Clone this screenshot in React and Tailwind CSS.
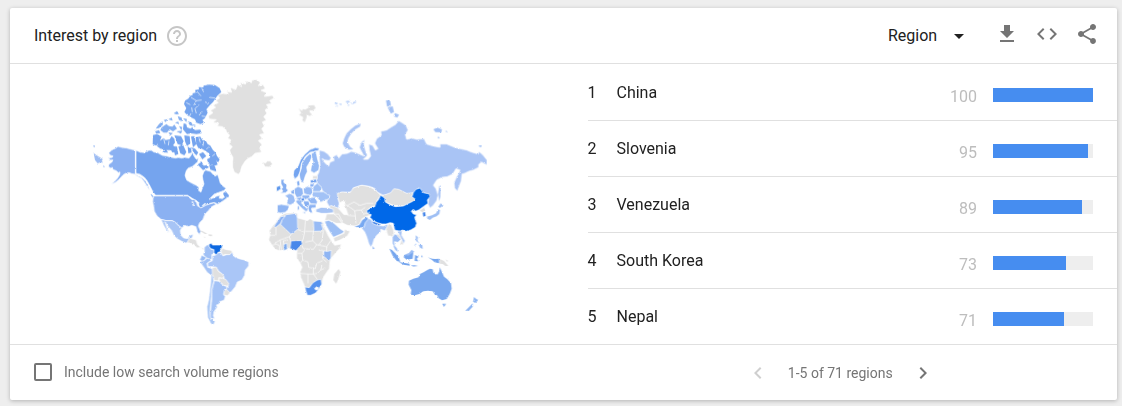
import { useState } from 'react'
import { MdArrowDropDown, MdChevronLeft, MdChevronRight, MdCode, MdGetApp, MdHelpOutline, MdShare } from 'react-icons/md'

const regions = [
  { rank: 1, name: 'China', value: 100 },
  { rank: 2, name: 'Slovenia', value: 95 },
  { rank: 3, name: 'Venezuela', value: 89 },
  { rank: 4, name: 'South Korea', value: 73 },
  { rank: 5, name: 'Nepal', value: 71 },
]

const NONE = '#e0e0e0'

// [fill, path], grouped by the part of the world they sit in
const northAmerica = [
  // Alaska
  ['#8bb1f2', 'M151 240L140 238L125 234L110 232L99 229L92 234L80 240L71 249L76 256L84 258L82 262L70 264L76 270L84 270L80 277L72 282L70 289L76 294L82 292L84 299L93 302L100 308L105 306L104 314L97 325L88 335L78 343L90 338L100 330L108 322L114 315L122 310L132 308L140 311L151 313L162 318L172 324L182 334L190 348L194 360L188 352L178 336L170 326L160 320L151 315Z'],
  // Canada
  ['#74a4ee', 'M153 241L165 246L178 248L188 242L198 240L207 246L218 248L232 256L245 258L260 262L272 264L280 262L290 264L300 262L312 264L318 256L323 246L326 256L334 268L340 264L338 276L330 282L322 290L310 294L304 302L300 316L305 330L318 338L334 346L342 352L341 362L348 366L352 354L357 342L354 330L352 318L356 306L362 300L376 304L384 312L390 318L398 314L402 326L406 340L414 348L424 356L416 362L400 368L388 372L372 388L384 384L396 378L406 376L402 384L412 386L424 376L426 384L412 394L398 402L388 398L376 400L366 404L352 412L344 414L340 400L334 392L318 384L308 376L212 376L204 366L196 350L186 332L178 322L165 313L153 310Z'],
  // Greenland, Iceland
  [NONE, 'M370 138L384 128L376 122L392 112L384 106L400 98L392 92L404 84L398 76L412 70L430 72L424 64L440 67L436 52L452 59L458 44L470 50L466 38L482 42L484 33L500 38L500 31L516 29L526 38L520 47L534 44L541 56L528 61L544 68L538 79L550 78L562 76L567 84L554 92L560 100L544 104L550 112L540 120L546 130L536 140L544 150L532 156L538 168L530 176L538 190L524 194L532 206L520 212L531 224L524 234L530 246L510 250L500 260L488 266L480 274L470 290L466 306L460 313L448 306L443 292L443 276L444 262L437 250L434 240L442 230L432 222L438 210L428 204L434 196L425 186L422 178L412 170L396 168L402 160L384 157L394 149L373 147Z'],
  [NONE, 'M532 276L542 279L546 273L556 273L563 282L552 291L540 290Z'],
]

const arctic = [
  // Aleutians
  ['#9dbcf3', 'M26 249L35 256L45 262L54 268L50 272L54 278L46 277L38 280L30 270ZM24 227l6 0v4l-5 -1zM54 286l6 4l-4 2z'],
  // Newfoundland, Vancouver Island
  ['#74a4ee', 'M414 370L422 364L432 376L430 382L418 380ZM196 370l10 10l-4 2z'],
  // Ellesmere, Axel Heiberg
  ['#74a4ee', 'M315 78L324 74L322 70L332 68L330 60L342 58L341 51L355 52L356 47L372 44L390 45L404 54L409 66L398 76L392 84L384 96L374 106L364 118L368 128L360 144L352 150L358 158L346 162L334 158L330 148L318 142L308 136L298 126L304 114L297 102L300 92L310 86Z'],
  // Devon, Cornwallis
  ['#74a4ee', 'M294 178L296 160L304 162L306 172L316 176L322 172L330 180L346 179L350 189L335 192L318 190L306 192Z'],
  // Banks, Victoria
  ['#74a4ee', 'M204 195L216 192L230 200L224 214L214 227L203 223ZM222 214L236 204L242 210L254 208L260 198L268 206L270 218L264 226L272 232L274 246L262 247L258 240L244 240L250 248L232 247L238 238L226 236L216 228Z'],
  // Parry Islands
  ['#83aef0', 'M212 176L222 162L232 154L234 164L222 174ZM230 172L244 162L252 168L262 170L268 164L276 176L264 184L254 178L246 188L236 188L226 180ZM236 150l12 -3l-6 9zM250 148l10 -5l3 9zM266 130l10 -7l6 9l-8 1zM278 138l12 5l2 10l-10 -3zM270 158l10 -3l2 8zM282 168l10 3l-3 10zM274 184l18 -2l-4 9zM250 187l14 2l-8 7zM210 184l12 -4l4 9l-12 2zM294 144l12 3l-2 9zM308 154l12 4l4 10l-10 -3zM322 162l10 3l-2 6z'],
  // Prince of Wales, Somerset, King William
  ['#74a4ee', 'M268 196L288 198L296 214L290 226L278 222ZM298 196L314 198L316 220L306 228L300 214ZM280 230L294 224L304 246L298 256L286 250ZM264 228l12 2l4 22l-10 4zM308 230l10 4l2 14l-10 2z'],
  // Baffin
  ['#74a4ee', 'M318 200L328 198L334 222L324 232ZM332 202L346 200L352 210L362 212L368 222L376 227L384 240L392 248L396 258L404 268L400 276L394 272L398 284L386 288L370 280L366 268L376 262L372 250L360 242L350 236L340 234L334 222ZM342 252L354 246L364 258L352 268ZM338 284L350 275L356 287L366 285L372 292L354 300ZM318 232l12 4l10 12l-6 8l-8 -8zM372 284l18 5l4 16l-18 -6z'],
]

// fjords and straits cut into the arctic islands
const fjords = 'M336 64L348 78M350 54L356 66M318 82L334 92L350 90M334 92L326 106M342 104L330 116L334 130M304 98L316 104M390 84L374 82M372 100L360 96M352 124L342 136M320 112L322 126M312 142L318 130M364 140L350 138M236 206L240 222M252 212L250 226M342 204L346 218M356 214L354 228M372 230L364 238M390 252L382 258'

const southAmerica = [
  // USA, Mexico
  ['#8bb1f2', 'M205 18H308L320 25L333 32L338 48L348 54L362 46L374 42L388 38L392 44L380 50L370 62L360 72L354 88L344 98L340 108L347 124L344 134L337 126L333 110L320 106L310 110L298 106L291 114L280 106L272 98L262 92L244 92L228 88L216 78L208 64L206 50L203 34Z'],
  ['#a7c4f5', 'M228 88L244 92L262 92L272 98L282 108L290 114L286 122L288 136L296 144L308 146L314 136L325 133L321 144L312 150L304 160L290 154L276 146L266 136L260 122L248 108L240 95L246 114L254 128L244 120L236 106Z'],
  [NONE, 'M306 158L314 145L322 147L333 149L338 164L347 172L336 174L326 163L314 159ZM346 171L358 176L356 181Z'],
  // Colombia, Venezuela, Guyanas, Ecuador
  ['#a0c0f5', 'M358 172L366 165L374 164L373 170L378 178L387 180L388 190L380 194L381 208L372 208L360 202L354 192L358 186Z'],
  ['#1168e0', 'M372 163L380 159L382 165L396 165L410 165L412 171L407 178L407 185L399 187L399 192L392 195L387 187L387 179L378 176L373 171Z'],
  [NONE, 'M411 174L424 179L438 181L444 188L432 195L420 193L414 197L408 186Z'],
  ['#98bbf4', 'M350 196L364 202L358 212L350 217L345 208Z'],
  // Brazil, Peru
  ['#aac6f7', 'M382 198L392 195L400 188L408 188L414 198L424 194L434 194L441 187L448 200L462 206L478 210L491 216L491 228L481 240L479 256L471 270L457 276L451 290L440 304L432 310L422 298L430 288L424 276L416 264L410 252L400 242L392 232L382 230L368 230L368 218L382 212Z'],
  ['#a3c2f6', 'M346 214L358 212L366 204L380 210L366 220L368 232L382 236L384 250L378 256L366 247L355 230L346 218Z'],
  // Bolivia, Paraguay, Uruguay
  [NONE, 'M382 233L394 231L400 244L412 252L418 262L410 265L402 263L400 273L388 272L382 254Z'],
  [NONE, 'M401 264L412 265L422 268L431 280L429 289L414 286L403 273Z'],
  [NONE, 'M417 301L424 298L435 308L428 317L417 315Z'],
  // Argentina, Chile
  ['#a3c2f6', 'M388 272L402 274L414 286L427 290L418 300L416 314L421 320L417 331L404 335L402 343L394 345L397 351L387 365L385 377L389 386L375 385L376 366L378 350L380 330L380 300Z'],
  ['#a7c6f6', 'M379 256L384 256L386 274L380 300L379 320L376 350L375 370L376 384L390 394L386 404L400 408L378 402L368 382L366 350L371 330L376 290Z'],
]

const caribbean = [
  [NONE, 'M342 121L352 123L367 131L360 132L350 126ZM370 133L382 134L380 139L372 138ZM356 140l6 1l-3 2z'],
]

const russia = [
  ['#a9c4f5', 'M178 240L192 244L204 252L213 264L208 272L194 270L186 266L194 278L206 288L210 276L222 272L220 260L230 254L236 264L246 252L262 250L274 244L288 248L298 252L312 258L304 244L298 232L304 216L314 208L312 224L316 240L322 256L310 268L324 268L332 258L328 240L326 222L338 226L346 240L354 236L344 220L350 206L364 196L362 184L380 180L392 172L406 164L416 152L426 158L438 166L444 180L436 194L440 208L456 204L470 208L492 206L500 222L520 228L540 232L540 222L560 222L584 232L600 236L620 240L634 246L655 252L656 244L668 254L681 270L681 285L664 276L656 284L656 292L640 300L626 304L614 310L606 312L604 332L592 364L584 354L582 338L590 320L596 310L600 300L588 296L578 312L562 320L546 322L530 330L520 346L528 356L534 376L530 392L520 406L510 414L504 402L506 386L490 376L480 360L474 356L466 366L468 376L440 374L400 362L390 376L370 376L350 366L345 356L330 350L305 346L280 354L278 366L240 368L234 384L238 400L234 418L222 416L208 410L200 396L206 380L190 366L182 352L170 340L168 322L176 308L180 288L178 262Z'],
]

const russianIslands = [
  // Svalbard
  [NONE, 'M116 115L126 123L128 117L136 119L146 113L144 107L162 105L167 114L158 122L148 120L150 128L156 134L148 138L140 132L140 142L134 157L127 150L130 142L117 134L124 130Z'],
  ['#b9d0f8', 'M224 98h8v5h-6zM236 102l8 -2v6zM228 106l8 3l-6 1zM256 94l10 -2l4 4l-8 3zM272 100l8 -4l8 -3v5l-10 4zM262 104l6 0l-2 5z'],
  ['#a2c0f4', 'M378 91L390 91L393 107L381 110ZM383 112L398 109L402 126L392 131ZM404 129L417 134L412 143L402 139Z'],
  ['#a9c4f5', 'M248 220L253 204L260 190L272 178L286 167L302 161L300 170L286 178L274 190L265 204L262 216L270 230L280 238L266 239L252 230Z'],
  ['#a2c0f4', 'M520 178L532 173L546 178L544 187L526 186ZM556 182l6 2l-2 4zM533 200l7 3l-6 3zM656 226h9v4l-6 1z'],
  ['#a9c4f5', 'M538 347L542 352L541 380L538 394L534 372Z'],
]

const asiaAfrica = [
  // Central Asia and Iran
  [NONE, 'M234 24L232 10L246 6L270 8L280 -6L304 -14L328 -10L346 0L362 16L350 34L344 48L332 52L322 60L334 74L318 80L306 86L298 104L284 108L262 106L246 98L236 84L222 76L220 66L208 54L212 46L234 54L252 74L264 74L258 56L252 48L256 36L246 34L240 40Z'],
  [NONE, 'M200 72L222 72L236 84L246 100L228 100L206 90L194 92Z'],
  ['#a7c4f5', 'M168 58L184 52L208 54L220 58L220 68L200 70L184 70L168 66Z'],
  // Arabia
  ['#9dbff5', 'M194 94L206 91L222 100L240 116L252 124L248 130L238 134L220 142L208 124L198 106Z'],
  [NONE, 'M220 144L238 136L252 130L254 118L270 124L262 138L240 150L224 156Z'],
  // Pakistan, India, Nepal
  ['#77a8f1', 'M284 109L298 104L306 90L320 80L328 90L318 100L312 112L304 114L284 111Z'],
  ['#a7c5f7', 'M304 114L312 112L316 98L326 86L332 88L340 98L356 106L370 108L384 102L382 112L374 122L362 118L362 126L350 136L342 148L338 162L332 172L326 160L320 140L314 126Z'],
  ['#4385ea', 'M338 93L350 98L361 102L359 108L346 104L337 100Z'],
  // Mongolia, China
  [NONE, 'M362 18L376 14L392 8L402 -4L416 -2L440 10L460 8L456 20L470 28L446 40L430 48L400 46L376 36L374 24Z'],
  ['#0067e8', 'M320 62L332 54L344 50L348 38L356 28L362 16L374 24L376 36L390 44L406 50L430 48L446 40L458 34L466 28L456 20L460 8L468 -2L480 -6L490 8L508 12L510 20L502 30L504 40L490 50L476 60L466 64L460 58L454 64L460 72L470 74L464 82L470 100L466 112L452 120L438 124L428 120L418 124L404 120L400 100L390 98L378 102L366 102L352 98L340 92L330 82L334 74L322 70Z'],
  // Myanmar, Thailand, Laos, Vietnam
  [NONE, 'M384 104L392 100L400 118L402 130L398 142L392 138L384 138L378 118Z'],
  ['#9cbef5', 'M397 142L404 132L412 134L423 148L414 157L403 155L405 167L412 177L404 174L397 160Z'],
  [NONE, 'M408 130L420 136L431 152L430 165L420 163L424 150L414 140Z'],
  ['#a7c4f5', 'M412 123L427 123L425 136L435 152L431 162L424 146Z'],
  // Africa
  [NONE, 'M60 78L76 70L100 68L112 70L114 84L128 88L142 92L150 86L160 92L184 94L192 100L190 110L198 122L204 136L214 152L224 166L244 162L240 174L226 190L214 204L210 214L208 236L198 250L190 262L186 280L174 298L162 312L144 314L138 302L132 284L122 262L120 246L126 232L120 218L110 204L110 190L112 180L100 180L90 174L76 178L58 182L46 178L36 166L26 150L30 136L28 122L38 108L50 94Z'],
  ['#98bbf5', 'M66 88L78 74L108 70L112 84L113 118L98 130L92 132L66 108L62 104Z'],
  ['#8bb2f3', 'M48 100L62 80L76 78L66 90L62 100L48 112L42 110Z'],
  ['#98bbf5', 'M160 93L184 95L190 103L184 102L191 123L162 124Z'],
  ['#4a88ea', 'M93 153L108 152L125 152L127 162L118 171L108 182L98 178L90 176Z'],
  ['#7caaf0', 'M71 163L81 160L82 178L71 182Z'],
  ['#8fb5f3', 'M191 183L204 184L214 181L213 204L207 212L191 199Z'],
  ['#5792ee', 'M135 291L148 293L158 279L172 270L183 268L185 282L179 294L167 309L152 316L142 316L137 302Z'],
  ['#fff', 'M164 295l6 -5l6 3l-3 6l-6 1z'],
]

const pacific = [
  // Sri Lanka, Madagascar
  ['#98bbf4', 'M338 168L344 176L338 178Z'],
  [NONE, 'M223 252L236 237L241 246L234 270L228 281L220 270Z'],
  // Korea, Japan
  [NONE, 'M479 62L492 53L496 60L488 67Z'],
  ['#3f82e8', 'M488 68L495 66L497 77L490 80Z'],
  ['#9fbff4', 'M535 50L542 40L550 46L540 54ZM534 58L540 60L538 72L530 79L518 83L510 90L502 86L500 80L516 76L528 70Z'],
  // Malay archipelago
  ['#76a6ee', 'M388 176L396 180L406 190L416 202L421 216L410 213L398 197ZM416 216L434 219L448 221L450 227L430 224ZM433 196L446 194L452 184L460 186L458 206L440 209L431 202Z'],
  ['#9cbef5', 'M400 168l10 6l4 12l-8 -6zM433 194l14 -5l8 -10l8 6l-10 6l-8 6zM452 226l12 -1l10 3l-14 2z'],
  ['#76a6ee', 'M465 195L476 200L470 206L475 214L464 213ZM484 194l4 8l-4 0zM504 202L516 206L526 207L537 206V220L524 217L516 210Z'],
  [NONE, 'M539 207L552 213L565 228L556 228L548 222L539 221ZM556 208l8 4l-2 4z'],
  ['#9cbef5', 'M467 136L474 142L472 152L480 161L468 153ZM476 164L487 165L488 177L480 173ZM462 168l6 -8l0 4z'],
  // Australia, New Zealand
  ['#79a8ee', 'M447 272L460 266L476 262L480 252L492 246L502 240L510 236L518 238L520 248L532 254L538 244L539 232L546 246L552 260L562 268L573 280L575 296L569 312L560 327L546 331L536 325L530 314L526 316L518 304L504 302L490 304L478 312L464 316L452 314L454 300L446 284ZM547 341L558 341L552 351Z'],
  ['#8db5f2', 'M642 321L649 327L655 330L646 339L639 335ZM616 362L628 350L638 340L638 350L626 363Z'],
]

const europe = [
  ['#73a4f0', 'M70 90L72 76L84 64L92 44L104 28L120 14L136 8L148 10L146 16L130 20L120 22L106 34L94 56L90 80L84 94L74 102Z'],
  ['#8fb5f3', 'M90 100L88 88L94 70L96 54L108 36L120 26L126 34L120 50L110 66L112 80L106 92L100 112L94 112Z'],
  ['#94b9f4', 'M124 26L138 18L142 40L148 62L146 76L132 84L122 78L124 64L130 52L126 42Z'],
  ['#84aef1', 'M33 103L43 103L41 112L51 120L49 130L55 136L47 143L31 145L39 138L33 130L39 128L33 116Z'],
  ['#5f98ec', 'M19 126L30 121L33 132L20 140Z'],
  ['#9bbdf5', 'M44 152L60 145L72 152L76 168L70 176L60 180L50 176L54 160Z'],
  ['#8fb5f3', 'M22 180L34 178L58 182L54 194L46 202L32 204L22 202Z'],
  ['#92b7f4', 'M72 132L84 124L98 130L100 146L94 156L80 158L74 146Z'],
  ['#84aef1', 'M80 110l8 -4l2 14l-8 4zM62 138l10 -4l2 14l-10 -2z'],
  ['#98bbf5', 'M100 130L112 124L126 128L128 144L120 152L102 146Z'],
  [NONE, 'M128 92H142V102H128Z'],
  ['#6d9fee', 'M120 106L138 102L142 112L122 114Z'],
  ['#8bb2f3', 'M120 116H134L130 126H120Z'],
  ['#9dbff5', 'M130 124L142 114L156 128L150 140L128 140Z'],
  ['#a2c2f6', 'M126 146L130 140L150 140L160 140L180 152L176 162L164 166L152 172L142 158L128 156Z'],
  ['#94b9f4', 'M76 168L90 162L98 168L94 174L106 186L116 194L108 200L96 190L84 178ZM82 184l6 -2v12l-6 2zM96 202l12 -2l-2 6z'],
  ['#8fb5f3', 'M96 150L118 150L120 158L108 164L96 160Z'],
  ['#81acf2', 'M76 160L94 156L98 162L88 166Z'],
  ['#3c7fe8', 'M93 160H104L102 168L94 167Z'],
  ['#92b7f4', 'M110 160L134 156L142 170L140 178L122 176Z'],
  ['#86aff2', 'M100 168L116 168L120 180L112 188L102 178Z'],
  ['#8bb2f3', 'M118 178L138 178L138 188L124 190L128 204L118 202L114 190Z'],
]

// inner borders between the countries that share one fill
const borders = 'M28 136L48 136L48 112M44 160L60 150L88 140L94 132M60 150L64 178M88 140L92 154M113 118L134 126L136 92M134 126L130 146L126 156M136 124L162 124M160 124L158 152L170 164L160 178L130 176L126 166M190 124L186 152L176 164M158 152L136 156M170 164L200 170L212 152M200 170L200 184M176 180L190 182L188 206L200 216M112 190L126 190L134 180M126 190L128 210L122 218M128 210L144 216L146 232L166 236L170 220L188 212M120 250L144 252L160 252L160 232M144 252V280M160 252L172 250L182 240L186 226M160 252L172 268M182 240L196 234M36 166L48 162L58 166L58 182M240 40L262 46L282 36L300 46L320 40L340 40M262 46L284 62L304 60L316 52M284 62L286 78L262 76M286 78L288 100M304 60L310 72L330 66M222 72L236 72L248 96M72 164L70 152L84 150'

const lakes = 'M312 20L324 30M322 34L326 48M330 32L342 40M352 48L362 40'

function Countries({ shapes, transform, stroke = '#fff' }) {
  return (
    <g transform={transform} stroke={stroke} strokeWidth="2" strokeLinejoin="round">
      {shapes.map(([fill, d], i) => <path key={i} fill={fill} d={d} />)}
    </g>
  )
}

function WorldMap() {
  return (
    <svg viewBox="0 0 1212 804" className="w-[404px] h-[268px]" role="img" aria-label="Interest by region map">
      <defs>
        <filter id="coast" x="0" y="0" width="100%" height="100%">
          <feTurbulence type="fractalNoise" baseFrequency="0.2" numOctaves="2" seed="4" result="noise" />
          <feDisplacementMap in="SourceGraphic" in2="noise" scale="6" xChannelSelector="R" yChannelSelector="G" />
        </filter>
      </defs>
      <g filter="url(#coast)">
        <Countries shapes={northAmerica} />
        <Countries shapes={arctic} stroke="none" />
        <path d={fjords} fill="none" stroke="#fff" strokeWidth="2" />
        <Countries shapes={southAmerica} transform="translate(0 360)" />
        <Countries shapes={caribbean} transform="translate(0 360)" stroke="none" />
        <Countries shapes={russia} transform="translate(525 0)" />
        <Countries shapes={russianIslands} transform="translate(525 0)" stroke="none" />
        <Countries shapes={asiaAfrica} transform="translate(525 360)" />
        <Countries shapes={pacific} transform="translate(525 360)" stroke="none" />
        <Countries shapes={europe} transform="translate(555 225)" />
        <path d={borders} transform="translate(525 360)" fill="none" stroke="#fff" strokeWidth="2" />
        <path d={lakes} transform="translate(0 360)" fill="none" stroke="#fff" strokeWidth="4" />
      </g>
    </svg>
  )
}

export default function App() {
  const [lowVolume, setLowVolume] = useState(false)

  return (
    <div className="bg-[#eeeeee] pt-2 pb-[5px] pl-[10px] pr-[5px] min-h-screen font-['Roboto',sans-serif] text-base text-[#212121]">
      <section className="bg-white rounded-xs shadow-[0_1px_4px_rgba(0,0,0,0.25)]">
        {/* Header */}
        <header className="flex items-center h-14 pl-6 pr-[18px] border-b border-[#e0e0e0]">
          <h2>Interest by region</h2>
          <button aria-label="Help" className="ml-2 text-[#c6c6c6]">
            <MdHelpOutline size={24} />
          </button>
          <div className="relative flex items-center ml-auto mr-6 pt-px">
            <select aria-label="Resolution" className="appearance-none bg-transparent w-[83px] pr-6 outline-none">
              <option>Region</option>
              <option>City</option>
            </select>
            <MdArrowDropDown size={24} className="absolute right-0 pointer-events-none" />
          </div>
          <div className="flex gap-4 pb-1 text-[#757575]">
            <button aria-label="Download"><MdGetApp size={24} /></button>
            <button aria-label="Embed"><MdCode size={24} /></button>
            <button aria-label="Share"><MdShare size={24} /></button>
          </div>
        </header>

        {/* Map and ranking */}
        <div className="grid grid-cols-2">
          <div className="flex items-center justify-center">
            <WorldMap />
          </div>
          <ol className="ml-6">
            {regions.map(r => (
              <li key={r.rank} className="flex items-center h-14 pr-6 border-t border-[#e0e0e0] first:border-transparent">
                <span className="w-[29px]">{r.rank}</span>
                <span>{r.name}</span>
                <span className="ml-auto mr-4 pt-2 text-[#bdbdbd]">{r.value}</span>
                <div className="w-[100px] h-[14px] mt-1 bg-[#eeeeee]">
                  <div className="h-full bg-[#468df0]" style={{ width: `${r.value}%` }} />
                </div>
              </li>
            ))}
          </ol>
        </div>

        {/* Footer */}
        <footer className="grid grid-cols-2 items-center h-14 border-t border-[#e0e0e0] text-sm text-[#757575]">
          <label className="flex items-center gap-3 pl-6 pb-0.5">
            <input
              type="checkbox"
              checked={lowVolume}
              onChange={e => setLowVolume(e.target.checked)}
              className="appearance-none size-[18px] border-2 border-[#757575] rounded-xs checked:bg-[#757575]"
            />
            Include low search volume regions
          </label>
          <div className="flex items-center justify-center">
            <button aria-label="Previous" disabled className="text-[#cfcfcf]"><MdChevronLeft size={24} /></button>
            <span className="mx-[18px]">1-5 of 71 regions</span>
            <button aria-label="Next"><MdChevronRight size={24} /></button>
          </div>
        </footer>
      </section>
    </div>
  )
}
